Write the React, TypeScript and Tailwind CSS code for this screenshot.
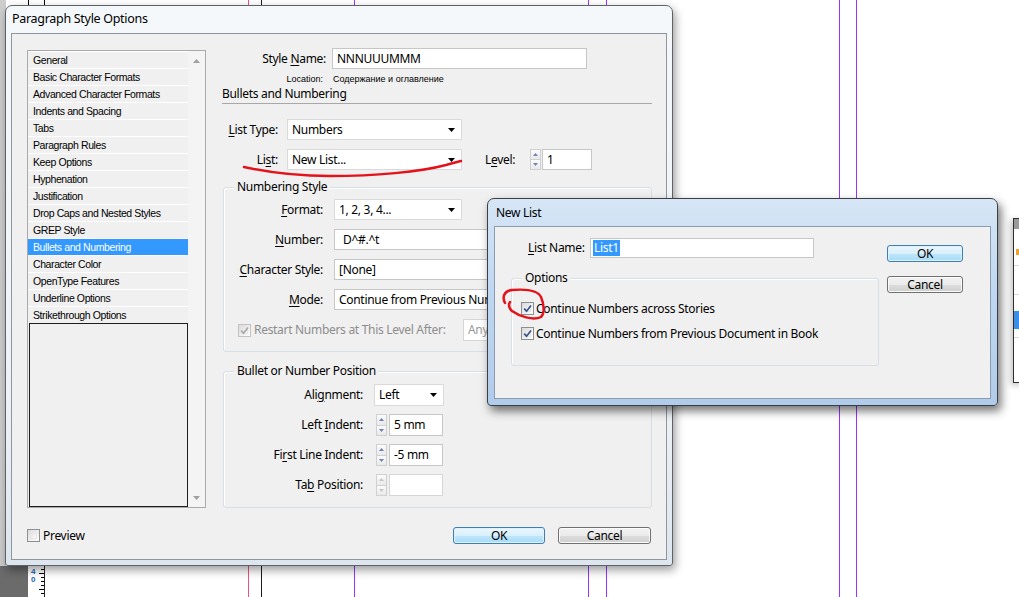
import React from "react";

const ITEMS = [
  "General",
  "Basic Character Formats",
  "Advanced Character Formats",
  "Indents and Spacing",
  "Tabs",
  "Paragraph Rules",
  "Keep Options",
  "Hyphenation",
  "Justification",
  "Drop Caps and Nested Styles",
  "GREP Style",
  "Bullets and Numbering",
  "Character Color",
  "OpenType Features",
  "Underline Options",
  "Strikethrough Options",
];

const SELECTED = "Bullets and Numbering";

function Mn({ children }: { children: React.ReactNode }) {
  return <span className="underline decoration-1 underline-offset-[2px]">{children}</span>;
}

function DownArrow() {
  return (
    <svg width="7" height="4" viewBox="0 0 7 4" className="shrink-0">
      <path d="M0 0H7L3.5 4Z" fill="#000" />
    </svg>
  );
}

function Dropdown({ value, className = "" }: { value: string; className?: string }) {
  return (
    <div
      className={`flex h-[21px] shrink-0 items-center justify-between border border-[#dadada] bg-white pl-[4px] pr-[6px] ${className}`}
    >
      <span className="whitespace-nowrap">{value}</span>
      <DownArrow />
    </div>
  );
}

function TextBox({
  children,
  className = "",
  disabled = false,
}: {
  children?: React.ReactNode;
  className?: string;
  disabled?: boolean;
}) {
  return (
    <div
      className={`flex h-[21px] shrink-0 items-center overflow-hidden whitespace-nowrap border bg-white pl-[4px] ${
        disabled ? "border-[#d6d6d6] text-[#9a9a9a]" : "border-[#c6c6c6]"
      } ${className}`}
    >
      {children}
    </div>
  );
}

function Spin({ disabled = false }: { disabled?: boolean }) {
  const fill = disabled ? "#c6c6c6" : "#7080b4";
  return (
    <div className="flex h-full w-[11px] shrink-0 flex-col">
      <div className="flex flex-1 items-center justify-center border border-[#d0d0d0] bg-[linear-gradient(#fbfbfb,#e9e9e9)]">
        <svg width="5" height="3" viewBox="0 0 5 3">
          <path d="M0 3H5L2.5 0Z" fill={fill} />
        </svg>
      </div>
      <div className="flex flex-1 items-center justify-center border border-t-0 border-[#d0d0d0] bg-[linear-gradient(#fbfbfb,#e9e9e9)]">
        <svg width="5" height="3" viewBox="0 0 5 3">
          <path d="M0 0H5L2.5 3Z" fill={fill} />
        </svg>
      </div>
    </div>
  );
}

function Check({ checked = false, disabled = false }: { checked?: boolean; disabled?: boolean }) {
  return (
    <span
      className={`relative flex h-[13px] w-[13px] shrink-0 items-center justify-center border ${
        disabled ? "border-[#c2c2c2]" : "border-[#8e8f8f]"
      } bg-[linear-gradient(135deg,#dadada,#ffffff)]`}
    >
      <span className="absolute inset-[2px] border border-[#e6e6e6] bg-[linear-gradient(135deg,#e2e2e2,#fbfbfb)]" />
      {checked && (
        <svg width="9" height="9" viewBox="0 0 9 9" className="relative">
          <path
            d="M1.2 4.6L3.6 7.2L8 1.4"
            fill="none"
            stroke={disabled ? "#a9a9a9" : "#3b5488"}
            strokeWidth="1.7"
          />
        </svg>
      )}
    </span>
  );
}

function Group({
  label,
  className = "",
  children,
}: {
  label: string;
  className?: string;
  children: React.ReactNode;
}) {
  return (
    <div className={`relative shrink-0 rounded-[3px] border border-[#d5dfe5] shadow-[inset_1px_1px_0_#ffffff] ${className}`}>
      <span className="absolute left-[10px] top-[-9px] bg-[#f0f0f0] px-[3px] leading-[16px]">{label}</span>
      {children}
    </div>
  );
}

function Btn({ children, primary = false, className = "" }: { children: React.ReactNode; primary?: boolean; className?: string }) {
  return (
    <div
      className={`flex h-[17px] shrink-0 items-center justify-center rounded-[3px] border ${
        primary
          ? "border-[#3c7fb1] bg-[linear-gradient(#eaf6fd_0%,#d9f0fc_50%,#bee6fd_51%,#a9dbf6_100%)] shadow-[inset_0_0_0_1px_#dff2fc]"
          : "border-[#707070] bg-[linear-gradient(#f2f2f2_0%,#ebebeb_50%,#dddddd_51%,#cfcfcf_100%)] shadow-[inset_0_0_0_1px_#fbfbfb]"
      } ${className}`}
    >
      {children}
    </div>
  );
}

function ListBox() {
  return (
    <div className="mt-[2px] flex h-[458px] w-[179px] border border-[#a9a9a9] bg-[#f0f0f0]">
      <div className="flex w-[160px] flex-col">
        {ITEMS.map((item) => (
          <div
            key={item}
            className={`h-[17px] shrink-0 border-t border-white pl-[5px] font-['Liberation_Sans',sans-serif] text-[10.5px] leading-[16px] tracking-[-0.4px] ${
              item === SELECTED ? "bg-[#3399ff] text-white" : "text-black"
            }`}
          >
            {item}
          </div>
        ))}
        <div className="ml-[1px] flex-1 border border-[#1e1e1e]" />
      </div>
      <div className="flex w-[17px] flex-col items-center justify-between bg-[#f4f4f4] pb-[7px] pt-[8px]">
        <svg width="7" height="4" viewBox="0 0 7 4">
          <path d="M0 4H7L3.5 0Z" fill="#a0a0a0" />
        </svg>
        <svg width="7" height="4" viewBox="0 0 7 4">
          <path d="M0 0H7L3.5 4Z" fill="#a0a0a0" />
        </svg>
      </div>
    </div>
  );
}

function RightColumn() {
  return (
    <div className="ml-[16px] flex w-[430px] flex-col">
      <div className="flex h-[21px] items-center">
        <div className="w-[110px] pr-[6px] text-right">
          Style <Mn>N</Mn>ame:
        </div>
        <TextBox className="w-[255px] pl-[3px]">NNNUUUMMM</TextBox>
      </div>
      <div className="mt-[4px] flex h-[12px] items-center font-['Liberation_Sans',sans-serif] text-[9px] tracking-normal">
        <div className="w-[110px] pr-[9px] text-right">Location:</div>
        <div className="pl-[1px]">Содержание и оглавление</div>
      </div>
      <div className="mt-[2px] h-[17px] border-b border-[#a8a8a8] leading-[14px]">Bullets and Numbering</div>

      <div className="mt-[15px] flex h-[21px] items-center">
        <div className="w-[65px] pr-[9px] text-right">
          <Mn>L</Mn>ist Type:
        </div>
        <Dropdown value="Numbers" className="w-[175px]" />
      </div>
      <div className="mt-[9px] flex h-[21px] items-center">
        <div className="w-[65px] pr-[9px] text-right">
          Li<Mn>s</Mn>t:
        </div>
        <Dropdown value="New List..." className="w-[175px]" />
        <div className="ml-[23px] w-[45px]">
          L<Mn>e</Mn>vel:
        </div>
        <div className="flex h-[21px] items-stretch gap-[1px]">
          <Spin />
          <TextBox className="w-[50px] pl-[3px]">1</TextBox>
        </div>
      </div>

      <Group label="Numbering Style" className="ml-[1px] mt-[17px] h-[165px] w-[429px]">
        <div className="flex flex-col gap-[9px] pt-[11px]">
          <div className="flex h-[21px] items-center">
            <div className="w-[110px] pr-[11px] text-right">
              <Mn>F</Mn>ormat:
            </div>
            <Dropdown value="1, 2, 3, 4..." className="w-[128px]" />
          </div>
          <div className="flex h-[21px] items-center">
            <div className="w-[110px] pr-[11px] text-right">
              <Mn>N</Mn>umber:
            </div>
            <TextBox className="w-[266px] pl-[8px]">D^#.^t</TextBox>
          </div>
          <div className="flex h-[21px] items-center">
            <div className="w-[110px] pr-[11px] text-right">
              <Mn>C</Mn>haracter Style:
            </div>
            <TextBox className="w-[266px]">[None]</TextBox>
          </div>
          <div className="flex h-[21px] items-center">
            <div className="w-[110px] pr-[11px] text-right">
              <Mn>M</Mn>ode:
            </div>
            <TextBox className="w-[160px]">Continue from Previous Number</TextBox>
          </div>
          <div className="flex h-[22px] items-center pl-[14px]">
            <Check checked disabled />
            <span className="ml-[3px] w-[209px] text-[#8d8d8d]">Restart Numbers at This Level After:</span>
            <TextBox disabled className="h-[22px] w-[27px]">
              Any Previous Level
            </TextBox>
          </div>
        </div>
      </Group>

      <Group label="Bullet or Number Position" className="ml-[1px] mt-[19px] h-[137px] w-[429px]">
        <div className="flex flex-col gap-[8px] pt-[12px]">
          <div className="flex h-[22px] items-center">
            <div className="w-[150px] pr-[11px] text-right">
              Ali<Mn>g</Mn>nment:
            </div>
            <Dropdown value="Left" className="h-[22px] w-[70px]" />
          </div>
          <div className="flex h-[22px] items-center">
            <div className="w-[150px] pr-[11px] text-right">
              Left <Mn>I</Mn>ndent:
            </div>
            <div className="ml-[2px] flex h-[22px] gap-[2px]">
              <Spin />
              <TextBox className="h-[22px] w-[54px] pl-[3px]">5 mm</TextBox>
            </div>
          </div>
          <div className="flex h-[22px] items-center">
            <div className="w-[150px] pr-[11px] text-right">
              Fi<Mn>r</Mn>st Line Indent:
            </div>
            <div className="ml-[2px] flex h-[22px] gap-[2px]">
              <Spin />
              <TextBox className="h-[22px] w-[54px] pl-[3px]">-5 mm</TextBox>
            </div>
          </div>
          <div className="flex h-[22px] items-center">
            <div className="w-[150px] pr-[11px] text-right">
              Ta<Mn>b</Mn> Position:
            </div>
            <div className="ml-[2px] flex h-[22px] gap-[2px]">
              <Spin disabled />
              <TextBox disabled className="h-[22px] w-[54px] border-[#c6c6c6]" />
            </div>
          </div>
        </div>
      </Group>

      <div className="mt-[19px] flex justify-end gap-[13px] pr-[1px]">
        <Btn primary className="w-[92px]">
          OK
        </Btn>
        <Btn className="w-[93px]">Cancel</Btn>
      </div>
    </div>
  );
}

function Guides() {
  return (
    <>
      <div className="absolute left-0 top-0 h-full w-[6px] bg-[#cdcdcd]" />
      <div className="absolute left-[28px] top-[-2px] h-[8px] w-[17px] border border-black bg-white" />
      <div className="absolute left-0 top-[566px] h-[31px] w-[28px] bg-[#6b6b6b]" />
      <div className="absolute left-[28px] top-[566px] flex h-[31px] w-[17px] border-r border-[#222] bg-white">
        <div className="flex flex-col pl-[3px] pt-[2px] font-['Liberation_Sans',sans-serif] text-[8px] font-bold leading-[8px] tracking-normal text-[#1f5fbf]">
          <span>4</span>
          <span>0</span>
        </div>
        <div className="ml-auto flex flex-col items-end gap-[3px] pt-[3px]">
          <div className="h-px w-[3px] bg-black" />
          <div className="h-px w-[5px] bg-black" />
          <div className="h-px w-[3px] bg-black" />
          <div className="h-px w-[3px] bg-black" />
          <div className="h-px w-[3px] bg-black" />
          <div className="h-px w-[5px] bg-black" />
          <div className="h-px w-[3px] bg-black" />
        </div>
      </div>
      <div className="absolute left-[248px] top-0 h-full w-px bg-[#f0527a]" />
      <div className="absolute left-[261px] top-0 h-full w-px bg-[#1c1c1c]" />
      <div className="absolute left-[354px] top-0 h-full w-px bg-[#9933ff]" />
      <div className="absolute left-[588px] top-0 h-full w-px bg-[#9933ff]" />
      <div className="absolute left-[606px] top-0 h-full w-px bg-[#9933ff]" />
      <div className="absolute left-[839px] top-0 h-full w-px bg-[#9933ff]" />
      <div className="absolute left-[856px] top-0 h-full w-px bg-[#9933ff]" />
      <div className="absolute left-[1013px] top-[218px] flex h-[165px] w-[10px] flex-col border-l border-t border-b border-[#2e2e2e] bg-white shadow-[-2px_2px_6px_rgba(0,0,0,0.25)]">
        <div className="h-[10px] bg-[#9a9a9a]" />
        <div className="ml-[2px] mt-[20px] h-[6px] w-[4px] bg-[#f0a030]" />
        <div className="mt-[10px] h-px bg-[#d8d8d8]" />
        <div className="mt-[28px] h-px bg-[#d8d8d8]" />
        <div className="mt-[16px] h-[18px] bg-[#3a8ee6]" />
        <div className="mt-[8px] h-px bg-[#d8d8d8]" />
      </div>
    </>
  );
}

export default function App() {
  return (
    <div className="relative h-[597px] w-[1019px] overflow-hidden bg-white font-['Noto_Sans',sans-serif] text-[12px] leading-none tracking-[-0.3px] text-black">
      <Guides />

      <div className="absolute left-[5px] top-[5px] flex h-[561px] w-[668px] flex-col rounded-b-[3px] rounded-t-[7px] border border-[#5f6368] bg-[linear-gradient(180deg,#f5f8fb,#eef2f6_70%,#dde5ee)] px-[5px] shadow-[2px_4px_10px_rgba(0,0,0,0.4)]">
        <div className="flex h-[27px] items-center pl-[1px] text-[12.5px]">Paragraph Style Options</div>
        <div className="flex h-[527px] border border-[#8f969e] bg-[#f0f0f0] pl-[15px] pt-[14px]">
          <div className="flex flex-col">
            <ListBox />
            <div className="mt-[21px] flex items-center gap-[3px]">
              <Check />
              <span>Preview</span>
            </div>
          </div>
          <RightColumn />
        </div>
      </div>

      <div className="absolute left-[487px] top-[198px] flex h-[208px] w-[511px] flex-col rounded-b-[4px] rounded-t-[7px] border border-[#3b3f44] bg-[linear-gradient(180deg,#d6e6f6,#bfd7f0_45%,#b1cbea)] px-[6px] shadow-[3px_5px_10px_rgba(0,0,0,0.55)]">
        <div className="flex h-[27px] items-center pl-[2px]">New List</div>
        <div className="flex h-[173px] border border-[#8b9bb0] bg-[#f0f0f0]">
          <div className="flex w-[384px] flex-col pl-[16px] pt-[11px]">
            <div className="ml-[17px] flex h-[20px] items-center">
              <span className="w-[62px]">
                <Mn>L</Mn>ist Name:
              </span>
              <div className="flex h-[20px] w-[224px] items-center border border-[#c6c6c6] bg-white pl-[2px]">
                <span className="bg-[#3399ff] px-px py-[2px] text-white">List1</span>
              </div>
            </div>
            <Group label="Options" className="mt-[20px] h-[88px] w-[368px]">
              <div className="flex flex-col gap-[12px] pl-[9px] pt-[23px]">
                <div className="flex h-[13px] items-center gap-[2px]">
                  <Check checked />
                  <span>Continue Numbers across Stories</span>
                </div>
                <div className="flex h-[13px] items-center gap-[2px]">
                  <Check checked />
                  <span>Continue Numbers from Previous Document in Book</span>
                </div>
              </div>
            </Group>
          </div>
          <div className="ml-[8px] flex flex-col pt-[18px]">
            <Btn primary className="w-[76px]">
              OK
            </Btn>
            <Btn className="mt-[14px] w-[76px]">Cancel</Btn>
          </div>
        </div>
      </div>

      <svg className="pointer-events-none absolute left-0 top-0" width="1019" height="597" viewBox="0 0 1019 597">
        <path
          d="M244 167C262 171 290 176 330 176C375 176 420 172 446 165C452 163 457 162 461 161"
          fill="none"
          stroke="#e3121b"
          strokeWidth="2.5"
          strokeLinecap="round"
        />
        <path
          d="M505 303C502 297 504 291 512 290C524 289 537 289 541 297C544 304 545 313 541 317C533 321 519 316 512 311C509 308 508 305 510 302"
          fill="none"
          stroke="#e3121b"
          strokeWidth="2.5"
          strokeLinecap="round"
        />
      </svg>
    </div>
  );
}
